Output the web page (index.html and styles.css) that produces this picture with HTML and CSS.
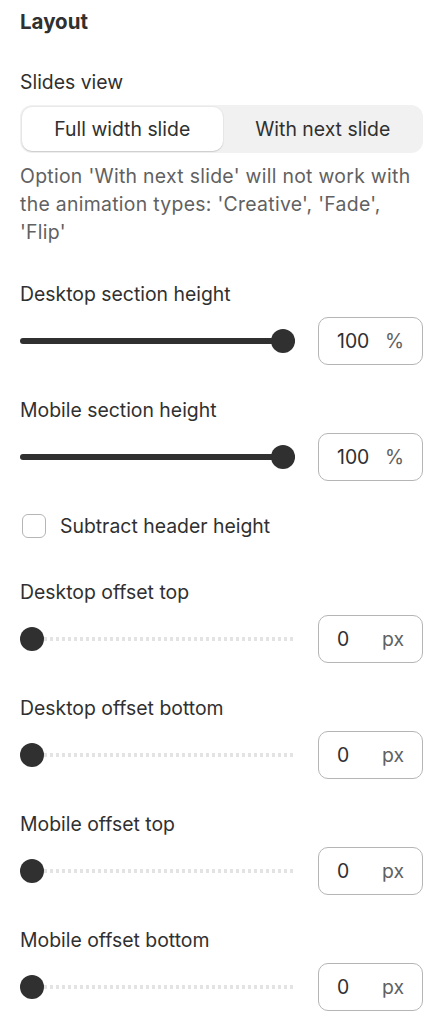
FILE: index.html
```html
<!DOCTYPE html>
<html>
<head>
<meta charset="utf-8">
<link rel="stylesheet" href="styles.css">
</head>
<body>
<div class="panel">
  <h2 class="title">Layout</h2>

  <div class="field">
    <div class="label">Slides view</div>
    <div class="segment">
      <div class="seg-item active">Full width slide</div>
      <div class="seg-item">With next slide</div>
    </div>
    <div class="help">Option 'With next slide' will not work with the animation types: 'Creative', 'Fade', 'Flip'</div>
  </div>

  <div class="field">
    <div class="label">Desktop section height</div>
    <div class="row">
      <div class="slider full"><div class="thumb"></div></div>
      <div class="box"><span class="val">100</span><span class="suf">%</span></div>
    </div>
  </div>

  <div class="field">
    <div class="label">Mobile section height</div>
    <div class="row">
      <div class="slider full"><div class="thumb"></div></div>
      <div class="box"><span class="val">100</span><span class="suf">%</span></div>
    </div>
  </div>

  <label class="check">
    <span class="checkbox"></span>
    <span class="check-label">Subtract header height</span>
  </label>

  <div class="field">
    <div class="label">Desktop offset top</div>
    <div class="row">
      <div class="slider empty"><div class="thumb"></div></div>
      <div class="box"><span class="val">0</span><span class="suf">px</span></div>
    </div>
  </div>

  <div class="field">
    <div class="label">Desktop offset bottom</div>
    <div class="row">
      <div class="slider empty"><div class="thumb"></div></div>
      <div class="box"><span class="val">0</span><span class="suf">px</span></div>
    </div>
  </div>

  <div class="field">
    <div class="label">Mobile offset top</div>
    <div class="row">
      <div class="slider empty"><div class="thumb"></div></div>
      <div class="box"><span class="val">0</span><span class="suf">px</span></div>
    </div>
  </div>

  <div class="field">
    <div class="label">Mobile offset bottom</div>
    <div class="row">
      <div class="slider empty"><div class="thumb"></div></div>
      <div class="box"><span class="val">0</span><span class="suf">px</span></div>
    </div>
  </div>
</div>
</body>
</html>
```

FILE: styles.css
```css
* { box-sizing: border-box; }
html, body { margin: 0; padding: 0; background: #ffffff; }
body {
  font-family: Inter, "Noto Sans", sans-serif;
  color: #303030;
  font-size: 19.4px;
}
.panel {
  padding: 10px 19px 0 20px;
  display: flex;
  flex-direction: column;
  gap: 31px;
}
.title {
  margin: 0 0 3px 0;
  font-size: 20.5px;
  line-height: 24px;
  font-weight: 650;
}
.field {
  display: flex;
  flex-direction: column;
  gap: 9px;
}
.label {
  line-height: 28px;
}
.segment {
  display: grid;
  grid-template-columns: 1fr 1fr;
  height: 48px;
  background: #f1f1f1;
  border-radius: 12px;
  padding: 2px 0 2px 2px;
}
.seg-item {
  display: flex;
  align-items: center;
  justify-content: center;
  border-radius: 10px;
}
.seg-item.active {
  background: #ffffff;
  box-shadow: 0 1px 1px rgba(0,0,0,0.12), 0 0 0 1px rgba(0,0,0,0.03);
}
.help {
  color: #616161;
  line-height: 28px;
  letter-spacing: 0.3px;
  margin-bottom: 3px;
}
.row {
  display: flex;
  align-items: center;
  gap: 23px;
  height: 48px;
}
.slider {
  position: relative;
  width: 275px;
  height: 24px;
  display: flex;
  align-items: center;
}
.slider.full::before {
  content: "";
  display: block;
  width: 100%;
  height: 6px;
  border-radius: 3px;
  background: #303030;
}
.slider.empty::before {
  content: "";
  display: block;
  width: 100%;
  height: 4px;
  border-radius: 2px;
  background: repeating-linear-gradient(90deg, #e3e3e3 0 3px, transparent 3px 6px);
}
.thumb {
  position: absolute;
  top: 0;
  width: 24px;
  height: 24px;
  border-radius: 50%;
  background: #303030;
}
.slider.full .thumb { right: 0; }
.slider.empty .thumb { left: 0; }
.box {
  width: 105px;
  height: 48px;
  border: 1px solid #b5b5b5;
  border-radius: 10px;
  display: flex;
  align-items: center;
  justify-content: space-between;
  padding: 0 18px;
}
.suf { color: #616161; }
.check {
  display: flex;
  align-items: center;
  gap: 14px;
  height: 28px;
  padding-left: 2px;
  margin-bottom: 7px;
}
.checkbox {
  width: 24px;
  height: 24px;
  border: 1px solid #b5b5b5;
  border-radius: 6px;
  background: #fff;
}
```
